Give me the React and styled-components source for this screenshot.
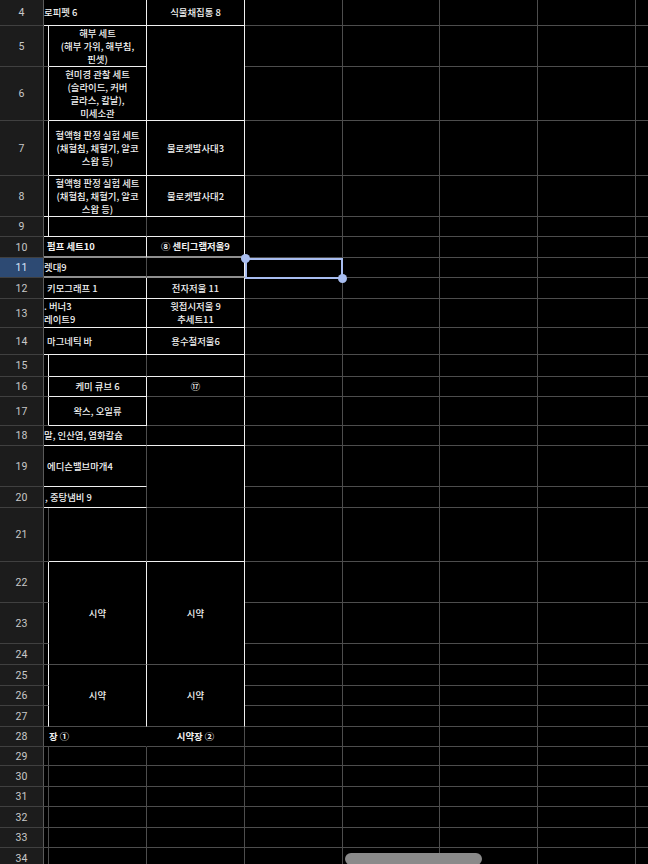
import React from 'react';
import styled, { createGlobalStyle } from 'styled-components';

const W = '#f0f0f0';
const G = '#4d4d4d';
const H = '#8f8f8f';
const N = 'transparent';

const COLS = [44, 5, 98, 98, 98, 97, 98, 98, 98];

// sheet rows: n = row number, h = height, cells for columns 2..4 (X, Y, Z)
const ROWS = [
  { n: 4, h: 26, cells: [
    { c: 2, s: 2, t: '로피펫 6', a: 'l', r: W, b: W },
    { c: 4, t: '식물채집통 8', r: W, b: W },
  ] },
  { n: 5, h: 41, cells: [
    { c: 2, r: W, b: G },
    { c: 3, t: '해부 세트\n(해부 가위, 해부침,\n핀셋)', r: W, b: W },
    { c: 4, rs: 2, r: W, b: W },
  ] },
  { n: 6, h: 54, cells: [
    { c: 2, r: W, b: G },
    { c: 3, t: '현미경 관찰 세트\n(슬라이드, 커버\n글라스, 칼날),\n미세소관', r: W, b: W },
  ] },
  { n: 7, h: 55, cells: [
    { c: 2, r: W, b: G },
    { c: 3, t: '혈액형 판정 실험 세트\n(채혈침, 채혈기, 알코\n스왑 등)', r: W, b: W },
    { c: 4, t: '물로켓발사대3', r: W, b: W },
  ] },
  { n: 8, h: 41, cells: [
    { c: 2, r: W, b: W },
    { c: 3, t: '혈액형 판정 실험 세트\n(채혈침, 채혈기, 알코\n스왑 등)', r: W, b: W },
    { c: 4, t: '물로켓발사대2', r: W, b: W },
  ] },
  { n: 9, h: 20, cells: [
    { c: 2, r: W, b: W },
    { c: 3, r: G, b: W },
    { c: 4, r: W, b: W },
  ] },
  { n: 10, h: 21, cells: [
    { c: 2, s: 2, t: '펌프 세트10', a: 'l', pad: 3, bold: true, r: W, b: H },
    { c: 4, t: '⑧ 센티그램저울9', bold: true, r: W, b: H },
  ] },
  { n: 11, h: 20, sel: true, cells: [
    { c: 2, s: 2, t: '렛대9', a: 'l', r: G, b: H },
    { c: 4, r: W, b: H },
  ] },
  { n: 12, h: 21, cells: [
    { c: 2, s: 2, t: '키모그래프 1', a: 'l', pad: 3, r: W, b: W },
    { c: 4, t: '전자저울 11', r: W, b: W },
  ] },
  { n: 13, h: 29, cells: [
    { c: 2, s: 2, t: '. 버너3\n레이트9', a: 'l', r: W, b: W },
    { c: 4, t: '윗접시저울 9\n추세트11', r: W, b: W },
  ] },
  { n: 14, h: 27, cells: [
    { c: 2, s: 2, t: '마그네틱 바', a: 'l', pad: 3, r: W, b: W },
    { c: 4, t: '용수철저울6', r: W, b: W },
  ] },
  { n: 15, h: 22, cells: [
    { c: 2, r: W, b: G },
    { c: 3, r: G, b: W },
    { c: 4, r: W, b: W },
  ] },
  { n: 16, h: 20, cells: [
    { c: 2, r: W, b: G },
    { c: 3, t: '케미 큐브 6', r: W, b: W },
    { c: 4, t: '⑰', r: W, b: G },
  ] },
  { n: 17, h: 29, cells: [
    { c: 2, r: W, b: G },
    { c: 3, t: '왁스, 오일류', r: W, b: W },
    { c: 4, r: W, b: G },
  ] },
  { n: 18, h: 20, cells: [
    { c: 2, s: 2, t: '말, 인산염, 염화칼슘', a: 'l', r: G, b: W },
    { c: 4, r: W, b: W },
  ] },
  { n: 19, h: 41, cells: [
    { c: 2, s: 2, t: '에디슨밸브마개4', a: 'l', pad: 3, r: G, b: W },
    { c: 4, rs: 2, r: W, b: G },
  ] },
  { n: 20, h: 21, cells: [
    { c: 2, s: 2, t: ', 중탕냄비 9', a: 'l', pad: 1, r: G, b: W },
  ] },
  { n: 21, h: 54, cells: [
    { c: 2, r: G, b: G },
    { c: 3, r: G, b: W },
    { c: 4, r: W, b: W },
  ] },
  { n: 22, h: 41, cells: [
    { c: 2, r: W, b: G },
    { c: 3, rs: 3, t: '시약', r: W, b: G },
    { c: 4, rs: 3, t: '시약', r: W, b: G },
  ] },
  { n: 23, h: 41, cells: [{ c: 2, r: W, b: G }] },
  { n: 24, h: 21, cells: [{ c: 2, r: W, b: G }] },
  { n: 25, h: 21, cells: [
    { c: 2, r: W, b: G },
    { c: 3, rs: 3, t: '시약', r: W, b: G },
    { c: 4, rs: 3, t: '시약', r: W, b: G },
  ] },
  { n: 26, h: 20, cells: [{ c: 2, r: W, b: G }] },
  { n: 27, h: 21, cells: [{ c: 2, r: W, b: G }] },
  { n: 28, h: 20, cells: [
    { c: 2, s: 2, t: '장 ①', a: 'l', pad: 5, bold: true, r: N, b: G },
    { c: 4, t: '시약장 ②', bold: true, r: G, b: G },
  ] },
  ...[29, 30, 31, 32, 33, 34].map((n, i) => ({
    n,
    h: [19, 21, 20, 21, 20, 21][i],
    cells: [
      { c: 2, r: G, b: G },
      { c: 3, r: G, b: G },
      { c: 4, r: G, b: G },
    ],
  })),
];

const GlobalStyle = createGlobalStyle`
  html, body {
    margin: 0;
    padding: 0;
    background: #000;
    overflow: hidden;
  }
  body {
    font-family: "Noto Sans CJK KR", "Noto Sans", sans-serif;
  }
`;

const Screen = styled.div`
  position: relative;
  width: 648px;
  height: 864px;
  overflow: hidden;
  background: #000;
`;

const Sheet = styled.div`
  display: grid;
  grid-template-columns: ${p => p.$cols.map(w => `${w}px`).join(' ')};
  grid-template-rows: ${p => p.$rows.map(r => `${r.h}px`).join(' ')};
`;

const RowHead = styled.div`
  grid-column: 1;
  grid-row: ${p => p.$row};
  box-sizing: border-box;
  display: flex;
  align-items: center;
  justify-content: center;
  background: ${p => (p.$active ? '#2d4a73' : '#1c1c1c')};
  color: ${p => (p.$active ? '#dbe6fb' : '#c8c8c8')};
  border-right: 1px solid #5a5a5a;
  border-bottom: 1px solid #404040;
  font-family: Roboto, "Noto Sans", sans-serif;
  font-size: 10.5px;
`;

const Cell = styled.div`
  grid-column: ${p => p.$col} / span ${p => p.$span};
  grid-row: ${p => p.$row} / span ${p => p.$rspan};
  position: relative;
  z-index: ${p => (p.$open ? 2 : 'auto')};
  box-sizing: border-box;
  display: flex;
  align-items: center;
  justify-content: ${p => (p.$left ? 'flex-start' : 'center')};
  text-align: ${p => (p.$left ? 'left' : 'center')};
  padding-left: ${p => p.$pad}px;
  border-right: 1px solid ${p => p.$r};
  border-bottom: ${p => (p.$b === H ? 2 : 1)}px solid ${p => p.$b};
  overflow: ${p => (p.$open ? 'visible' : 'hidden')};
  white-space: pre;
  color: #f2f2f2;
  font-size: 9.4px;
  line-height: 13px;
  font-weight: ${p => (p.$bold ? 700 : 500)};
`;

const Selection = styled.div`
  position: absolute;
  left: 0;
  top: 0;
  width: 98px;
  height: 21px;
  box-sizing: border-box;
  border: 2px solid #a8bdf0;
  pointer-events: none;
`;

const Handle = styled.div`
  position: absolute;
  width: 9px;
  height: 9px;
  border-radius: 50%;
  background: #a8bdf0;
  left: ${p => p.$x - 4.5}px;
  top: ${p => p.$y - 4.5}px;
`;

const Scrollbar = styled.div`
  position: absolute;
  left: 345px;
  top: 853px;
  width: 137px;
  height: 12px;
  border-radius: 6px;
  background: #8a8a8a;
`;

const SelectedCell = () => (
  <>
    <Selection />
    <Handle $x={0} $y={0} />
    <Handle $x={97} $y={20} />
  </>
);

const SheetCell = ({ cell, row }) => (
  <Cell
    $col={cell.c}
    $span={cell.s || 1}
    $row={row}
    $rspan={cell.rs || 1}
    $left={cell.a === 'l'}
    $pad={cell.pad || 0}
    $bold={cell.bold}
    $r={cell.r}
    $b={cell.b}
  >
    {cell.t}
  </Cell>
);

const App = () => {
  const selectedRow = ROWS.findIndex(r => r.sel) + 1;

  return (
    <Screen>
      <GlobalStyle />
      <Sheet $cols={COLS} $rows={ROWS}>
        {ROWS.map((r, i) => (
          <React.Fragment key={r.n}>
            <RowHead $row={i + 1} $active={r.sel}>{r.n}</RowHead>
            {r.cells.map(cell => (
              <SheetCell key={cell.c} cell={cell} row={i + 1} />
            ))}
            {[5, 6, 7, 8, 9].map(c => {
              const selected = c === 5 && i + 1 === selectedRow;
              return (
                <Cell key={c} $col={c} $span={1} $row={i + 1} $rspan={1} $r={G} $b={G} $pad={0} $open={selected}>
                  {selected && <SelectedCell />}
                </Cell>
              );
            })}
          </React.Fragment>
        ))}
      </Sheet>
      <Scrollbar />
    </Screen>
  );
};

export default App;
